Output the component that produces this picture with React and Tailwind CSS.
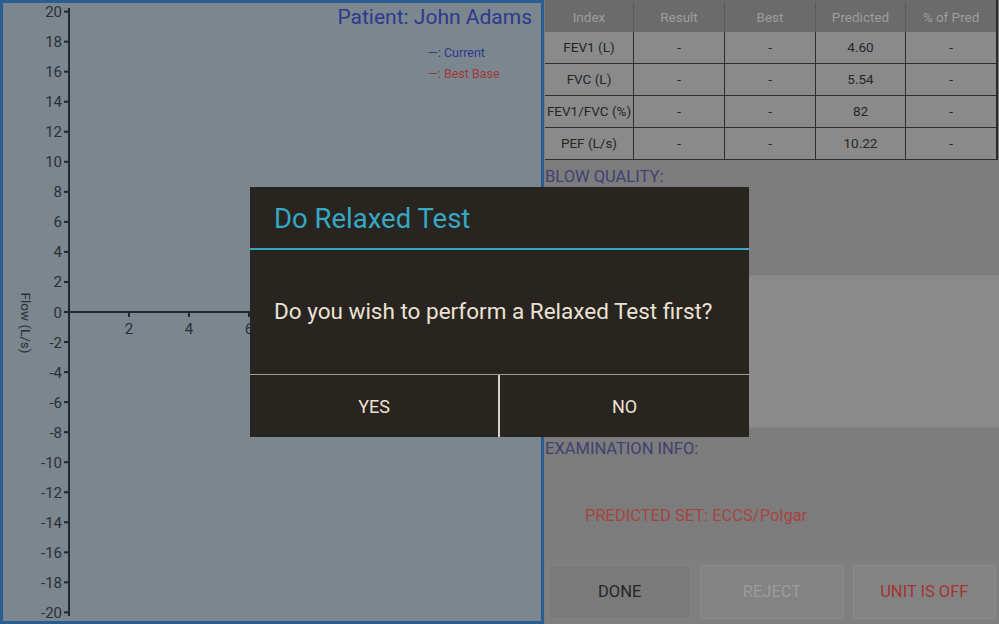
import React from 'react';

const yTicks = [20, 18, 16, 14, 12, 10, 8, 6, 4, 2, 0, -2, -4, -6, -8, -10, -12, -14, -16, -18, -20];
const rows = [
	['FEV1 (L)', '-', '-', '4.60', '-'],
	['FVC (L)', '-', '-', '5.54', '-'],
	['FEV1/FVC (%)', '-', '-', '82', '-'],
	['PEF (L/s)', '-', '-', '10.22', '-'],
];
const font = { fontFamily: 'Roboto, "Noto Sans", sans-serif' };

function Chart() {
	const yOf = (v) => 312 - v * 15.02;
	return (
		<div className="w-[544px] h-[624px] shrink-0 border-[3px] border-[#2b5e8f] bg-[#7b868e]">
			<svg width="538" height="618" className="block" style={font}>
				<g transform="translate(-3,-3)">
					{/* y axis */}
					<line x1="69" y1="8" x2="69" y2="616" stroke="#22282e" strokeWidth="2" />
					{yTicks.map((v) => (
						<g key={v}>
							<line x1="64" y1={yOf(v)} x2="69" y2={yOf(v)} stroke="#22282e" strokeWidth="2" />
							<text x="62" y={yOf(v) + 5.5} textAnchor="end" fontSize="15" fill="#2a3037">
								{v}
							</text>
						</g>
					))}
					{/* x axis */}
					<line x1="69" y1="312" x2="543" y2="312" stroke="#22282e" strokeWidth="2" />
					{[2, 4, 6].map((v, i) => (
						<g key={v}>
							<line x1={129 + i * 60} y1="312" x2={129 + i * 60} y2="317" stroke="#22282e" strokeWidth="2" />
							<text x={129 + i * 60} y="334" textAnchor="middle" fontSize="15" fill="#2a3037">
								{v}
							</text>
						</g>
					))}
					<text
						x="21"
						y="323"
						textAnchor="middle"
						fontSize="13.5"
						fill="#2a3037"
						transform="rotate(90 21 323)"
					>
						Flow (L/s)
					</text>
					<text x="532" y="24" textAnchor="end" fontSize="21" fill="#2c3a8e">
						Patient: John Adams
					</text>
					<text x="428" y="57" fontSize="12.5" fill="#2c3a8e">
						—: Current
					</text>
					<text x="428" y="78" fontSize="12.5" fill="#9e3a3a">
						—: Best Base
					</text>
				</g>
			</svg>
		</div>
	);
}

function Results() {
	return (
		<div className="flex-1 flex flex-col h-[624px] bg-[#7c7c7c] pl-px">
			{/* table */}
			<div className="w-[453px] border-r-2 border-[#2a2a2a]">
				<div className="grid grid-cols-[89px_91px_91px_90px_1fr] h-[32px] pt-[2px] bg-[#6b6b6b] text-[13.5px] text-[#9d9d9d]">
					{['Index', 'Result', 'Best', 'Predicted', '% of Pred'].map((h, i) => (
						<div
							key={h}
							className={`flex items-center justify-center ${i < 4 ? 'border-r border-[#5a5a5a]' : ''}`}
						>
							{h}
						</div>
					))}
				</div>
				{rows.map((r) => (
					<div
						key={r[0]}
						className="grid grid-cols-[89px_91px_91px_90px_1fr] h-[32px] bg-[#8a8a8a] border-b border-[#2e2e2e] text-[13.5px] text-[#262626]"
					>
						{r.map((c, i) => (
							<div
								key={i}
								className={`flex items-center justify-center ${i < 4 ? 'border-r border-[#2e2e2e]' : ''}`}
							>
								{c}
							</div>
						))}
					</div>
				))}
			</div>
			{/* blow quality */}
			<div className="h-[115px] pt-[9px] text-[16.5px] text-[#3f4272] leading-none">BLOW QUALITY:</div>
			<div className="h-[153px] bg-[#8a8a8a] border-y border-[#848484]" />
			{/* examination info */}
			<div className="h-[132px] flex flex-col pt-[13px] text-[16.5px] leading-none">
				<div className="text-[#3f4272]">EXAMINATION INFO:</div>
				<div className="mt-[50px] ml-[40px] text-[#a64540]">PREDICTED SET: ECCS/Polgar</div>
			</div>
			{/* buttons */}
			<div className="flex-1 flex gap-[9px] px-[3px] py-[5px] bg-[#7f7f7f] text-[16.5px]">
				<div className="flex-1 flex items-center justify-center bg-[#7a7a7a] border border-[#858585] text-[#262626]">
					DONE
				</div>
				<div className="flex-1 flex items-center justify-center bg-[#838383] border border-[#8a8a8a] text-[#9c9c9c]">
					REJECT
				</div>
				<div className="flex-1 flex items-center justify-center bg-[#838383] border border-[#8a8a8a] text-[#a33434]">
					UNIT IS OFF
				</div>
			</div>
		</div>
	);
}

export default function App() {
	return (
		<div className="relative w-[999px] h-[624px] overflow-hidden flex" style={font}>
			<Chart />
			<Results />
			{/* dialog */}
			<div className="absolute left-[250px] top-[187px] w-[499px] h-[250px] bg-[#28241f] flex flex-col">
				<div className="h-[61px] flex items-center pt-[2px] px-[24px] text-[27.5px] text-[#36a8c4]">Do Relaxed Test</div>
				<div className="h-[2px] bg-[#36a8c4]" />
				<div className="h-[124px] flex items-center px-[24px] text-[22.5px] text-[#ece2d4]">
					Do you wish to perform a Relaxed Test first?
				</div>
				<div className="h-px bg-[#a09a92]" />
				<div className="flex-1 flex text-[18px] text-[#ece2d4]">
					<div className="w-[250px] flex items-center justify-center border-r-2 border-[#d8d0c4]">YES</div>
					<div className="flex-1 flex items-center justify-center">NO</div>
				</div>
			</div>
		</div>
	);
}
